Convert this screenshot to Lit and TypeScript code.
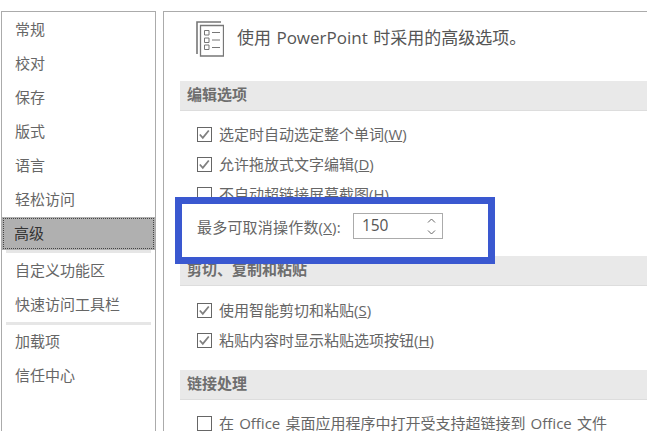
import { css, html, LitElement, nothing } from "lit";
import { customElement } from "lit/decorators.js";

const checkRows1 = [
	{ on: true, text: "选定时自动选定整个单词(", key: "W", tail: ")" },
	{ on: true, text: "允许拖放式文字编辑(", key: "D", tail: ")" },
	{ on: false, text: "不自动超链接屏幕截图(", key: "H", tail: ")" },
];
const checkRows2 = [
	{ on: true, text: "使用智能剪切和粘贴(", key: "S", tail: ")" },
	{ on: true, text: "粘贴内容时显示粘贴选项按钮(", key: "H", tail: ")" },
];
const checkRows3 = [
	{ on: false, text: "在 Office 桌面应用程序中打开受支持超链接到 Office 文件", key: "", tail: "" },
];

@customElement("app-root")
export class AppRoot extends LitElement {
	static styles = css`
		:host {
			display: block;
			width: 647px;
			height: 431px;
			overflow: hidden;
			background: #fff;
			position: relative;
			font-family: "Open Sans", "Noto Sans CJK SC", sans-serif;
			color: #666;
		}

		.page {
			display: flex;
			gap: 7px;
			height: 431px;
			padding: 11px 0 0 1px;
			box-sizing: border-box;
		}

		.nav {
			width: 155px;
			flex: none;
			box-sizing: border-box;
			border: 1px solid #ababab;
			border-bottom: none;
			padding-top: 1px;
			font-size: 15px;
		}

		.nav-item {
			height: 34px;
			line-height: 32px;
			padding-left: 13px;
		}

		.nav-item.selected {
			height: 33px;
			line-height: 28px;
			padding-left: 10px;
			background: #b0b0b0;
			color: #333;
			box-sizing: border-box;
			border: 2px solid #b0b0b0;
			outline: 1px dotted #444;
			outline-offset: -2px;
		}

		.nav-sep {
			height: 3px;
			margin: 0 4px;
			background: #e6e6e6;
		}

		.sep-a {
			margin-bottom: 1px;
		}

		.main {
			flex: 1;
			border-left: 1px solid #ababab;
			border-top: 1px solid #ababab;
			padding-left: 16px;
		}

		.title-row {
			display: flex;
			align-items: flex-start;
			gap: 13px;
			height: 69px;
			box-sizing: border-box;
			padding: 9px 0 0 16px;
			font-size: 17px;
			line-height: 34px;
			word-spacing: 1px;
			color: #555;
		}

		.title-row svg {
			flex: none;
		}

		.section {
			height: 30px;
			line-height: 26px;
			box-sizing: border-box;
			padding-left: 7px;
			background: #e9e9e9;
			border-bottom: 1px solid #ddd;
			font-size: 15px;
			font-weight: bold;
			color: #6e6e6e;
		}

		.group {
			padding: 7px 0 0 17px;
		}

		.group.cut {
			padding-top: 8px;
		}

		.check-row {
			display: flex;
			align-items: center;
			gap: 7px;
			height: 30px;
			font-size: 15px;
			word-spacing: 1.25px;
			white-space: nowrap;
		}

		.box {
			width: 15px;
			height: 15px;
			margin-top: 3px;
			flex: none;
			box-sizing: border-box;
			border: 1px solid #666;
		}

		.box svg {
			display: block;
		}

		u {
			text-underline-offset: 1px;
		}

		.gap-hidden {
			height: 48px;
		}

		.gap-small {
			height: 16px;
		}

		.callout {
			position: absolute;
			left: 175px;
			top: 197px;
			width: 320px;
			height: 67px;
			box-sizing: border-box;
			border: 7px solid #3a58d0;
			background: #fff;
			display: flex;
			align-items: center;
			padding: 0 0 9px 15px;
			font-size: 15px;
			gap: 12px;
		}

		.callout-label {
			letter-spacing: 0.2px;
		}

		.spin {
			width: 90px;
			height: 26px;
			box-sizing: border-box;
			border: 1px solid #ababab;
			display: flex;
			align-items: center;
			justify-content: space-between;
			padding: 0 6px 0 8px;
			font-size: 15.5px;
			color: #555;
		}

		.spin-value {
			padding-bottom: 2px;
		}

		.arrows {
			display: flex;
			flex-direction: column;
			gap: 7px;
		}

		.arrows svg {
			display: block;
		}
	`;

	private checkRow(r: { on: boolean; text: string; key: string; tail: string }) {
		return html`<div class="check-row">
			<span class="box">
				${r.on
					? html`<svg width="13" height="13" viewBox="0 0 13 13"><path d="M1.8 6.5 L4.8 9.8 L10.8 2.5" fill="none" stroke="#808080" stroke-width="1.8" /></svg>`
					: nothing}
			</span>
			<span>${r.text}${r.key ? html`<u>${r.key}</u>` : nothing}${r.tail}</span>
		</div>`;
	}

	render() {
		return html`
			<div class="page">
				<div class="nav">
					<div class="nav-item">常规</div>
					<div class="nav-item">校对</div>
					<div class="nav-item">保存</div>
					<div class="nav-item">版式</div>
					<div class="nav-item">语言</div>
					<div class="nav-item">轻松访问</div>
					<div class="nav-item selected">高级</div>
					<div class="nav-sep sep-a"></div>
					<div class="nav-item">自定义功能区</div>
					<div class="nav-item">快速访问工具栏</div>
					<div class="nav-sep"></div>
					<div class="nav-item">加载项</div>
					<div class="nav-item">信任中心</div>
				</div>
				<div class="main">
					<div class="title-row">
						<svg width="28" height="36" viewBox="0 0 28 36" fill="none">
							<path d="M1 33V1H25" stroke="#777" stroke-width="1.6" />
							<path d="M4.5 4.5H27.5V35H4.5Z" stroke="#777" stroke-width="1.3" />
							<path d="M8.5 9.5h4.5v4.5h-4.5zM8.5 17h4.5v4.5h-4.5zM8.5 24h4.5v4.5h-4.5z" stroke="#777" />
							<path d="M16 11.5h8M16 19h8M16 26.5h8" stroke="#777" />
						</svg>
						<span>使用 PowerPoint 时采用的高级选项。</span>
					</div>
					<div class="section">编辑选项</div>
					<div class="group">${checkRows1.map((r) => this.checkRow(r))}</div>
					<div class="gap-hidden"></div>
					<div class="section">剪切、复制和粘贴</div>
					<div class="group cut">${checkRows2.map((r) => this.checkRow(r))}</div>
					<div class="gap-small"></div>
					<div class="section">链接处理</div>
					<div class="group">${checkRows3.map((r) => this.checkRow(r))}</div>
				</div>
			</div>
			<div class="callout">
				<span class="callout-label">最多可取消操作数(<u>X</u>):</span>
				<div class="spin">
					<span class="spin-value">150</span>
					<span class="arrows">
						<svg width="9" height="5" viewBox="0 0 9 5"><path d="M1 4.5L4.5 1L8 4.5" fill="none" stroke="#666" /></svg>
						<svg width="9" height="5" viewBox="0 0 9 5"><path d="M1 .5L4.5 4L8 .5" fill="none" stroke="#666" /></svg>
					</span>
				</div>
			</div>
		`;
	}
}

declare global {
	interface HTMLElementTagNameMap {
		"app-root": AppRoot;
	}
}
